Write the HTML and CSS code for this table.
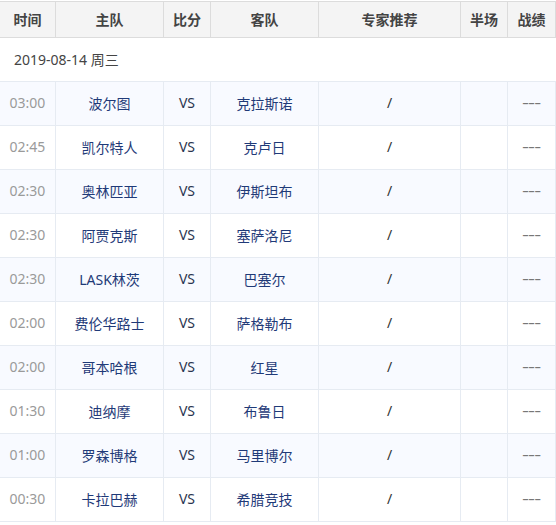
FILE: index.html
```html
<!DOCTYPE html>
<html lang="zh-CN">
<head>
<meta charset="utf-8">
<link rel="stylesheet" href="styles.css">
</head>
<body>
<div class="table">
  <div class="row head">
    <div class="c">时间</div><div class="c">主队</div><div class="c">比分</div><div class="c">客队</div><div class="c">专家推荐</div><div class="c">半场</div><div class="c">战绩</div>
  </div>
  <div class="date">2019-08-14 周三</div>
  <div class="row odd"><div class="c t">03:00</div><div class="c n">波尔图</div><div class="c vs">VS</div><div class="c n">克拉斯诺</div><div class="c s">/</div><div class="c"></div><div class="c d"><span>---</span></div></div>
  <div class="row"><div class="c t">02:45</div><div class="c n">凯尔特人</div><div class="c vs">VS</div><div class="c n">克卢日</div><div class="c s">/</div><div class="c"></div><div class="c d"><span>---</span></div></div>
  <div class="row odd"><div class="c t">02:30</div><div class="c n">奥林匹亚</div><div class="c vs">VS</div><div class="c n">伊斯坦布</div><div class="c s">/</div><div class="c"></div><div class="c d"><span>---</span></div></div>
  <div class="row"><div class="c t">02:30</div><div class="c n">阿贾克斯</div><div class="c vs">VS</div><div class="c n">塞萨洛尼</div><div class="c s">/</div><div class="c"></div><div class="c d"><span>---</span></div></div>
  <div class="row odd"><div class="c t">02:30</div><div class="c n">LASK林茨</div><div class="c vs">VS</div><div class="c n">巴塞尔</div><div class="c s">/</div><div class="c"></div><div class="c d"><span>---</span></div></div>
  <div class="row"><div class="c t">02:00</div><div class="c n">费伦华路士</div><div class="c vs">VS</div><div class="c n">萨格勒布</div><div class="c s">/</div><div class="c"></div><div class="c d"><span>---</span></div></div>
  <div class="row odd"><div class="c t">02:00</div><div class="c n">哥本哈根</div><div class="c vs">VS</div><div class="c n">红星</div><div class="c s">/</div><div class="c"></div><div class="c d"><span>---</span></div></div>
  <div class="row"><div class="c t">01:30</div><div class="c n">迪纳摩</div><div class="c vs">VS</div><div class="c n">布鲁日</div><div class="c s">/</div><div class="c"></div><div class="c d"><span>---</span></div></div>
  <div class="row odd"><div class="c t">01:00</div><div class="c n">罗森博格</div><div class="c vs">VS</div><div class="c n">马里博尔</div><div class="c s">/</div><div class="c"></div><div class="c d"><span>---</span></div></div>
  <div class="row"><div class="c t">00:30</div><div class="c n">卡拉巴赫</div><div class="c vs">VS</div><div class="c n">希腊竞技</div><div class="c s">/</div><div class="c"></div><div class="c d"><span>---</span></div></div>
</div>
</body>
</html>
```

FILE: styles.css
```css
html, body {
  margin: 0;
  padding: 0;
  background: #fff;
}
body {
  padding-top: 1px;
  font-family: "Noto Sans", "Noto Sans CJK SC", sans-serif;
  font-size: 14px;
  color: #333;
}
.table {
  width: 556px;
}
.row {
  display: grid;
  grid-template-columns: 56px 108px 47px 108px 142px 47px 48px;
  height: 44px;
  border-bottom: 1px solid #e6ebf2;
  box-sizing: border-box;
}
.row.odd {
  background: #f8faff;
}
.c {
  display: flex;
  align-items: center;
  justify-content: center;
  border-right: 1px solid #e6ebf2;
  box-sizing: border-box;
  white-space: nowrap;
  padding-bottom: 2px;
}
.row.head {
  height: 37px;
  background: #f4f4f4;
  border-top: 1px solid #dcdcdc;
  border-bottom: 1px solid #dcdcdc;
  font-weight: bold;
  color: #444;
  font-size: 14px;
}
.row.head .c {
  border-right-color: #dcdcdc;
}
.date {
  height: 44px;
  box-sizing: border-box;
  border-bottom: 1px solid #e6ebf2;
  display: flex;
  align-items: center;
  padding-left: 14px;
  padding-bottom: 2px;
  color: #444;
}
.t {
  color: #9a9a9a;
}
.n {
  color: #1f3a78;
}
.vs {
  color: #2a3550;
}
.s {
  color: #333;
}
.d {
  color: #777;
  font-family: "Liberation Sans", sans-serif;
  font-size: 14px;
}
.d span {
  display: inline-block;
  transform: scaleX(1.5);
  letter-spacing: -0.6px;
}
```
